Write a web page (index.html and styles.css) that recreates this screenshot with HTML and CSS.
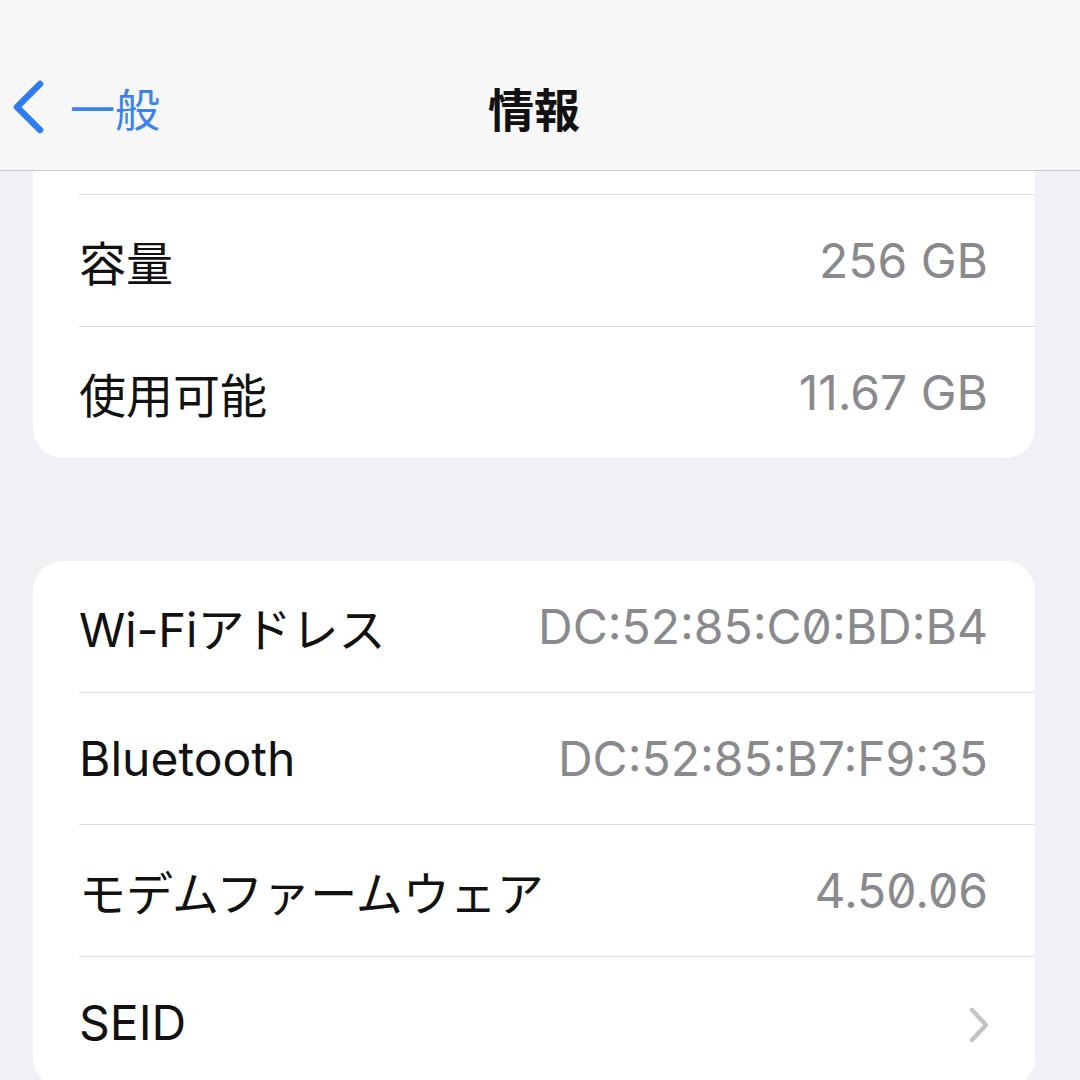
FILE: index.html
```html
<!DOCTYPE html>
<html lang="ja">
<head>
<meta charset="utf-8">
<title>情報</title>
<link rel="stylesheet" href="styles.css">
</head>
<body>
<header class="navbar">
  <div class="nav-back">
    <svg class="back-chevron" width="36" height="56" viewBox="0 0 36 56">
      <path d="M30 5 L7 28 L30 51" fill="none" stroke="#2f7cf0" stroke-width="6.5" stroke-linecap="round" stroke-linejoin="round"/>
    </svg>
    <span class="back-label">一般</span>
  </div>
  <h1 class="nav-title">情報</h1>
  <div></div>
</header>

<main class="content">
  <section class="group group-cut">
    <div class="row row-stub"></div>
    <div class="row"><span class="label">容量</span><span class="value">256 GB</span></div>
    <div class="row"><span class="label">使用可能</span><span class="value">11.67 GB</span></div>
  </section>

  <section class="group">
    <div class="row"><span class="label">Wi-Fiアドレス</span><span class="value mono">DC:52:85:C0:BD:B4</span></div>
    <div class="row"><span class="label latin">Bluetooth</span><span class="value mono">DC:52:85:B7:F9:35</span></div>
    <div class="row"><span class="label">モデムファームウェア</span><span class="value mono">4.50.06</span></div>
    <div class="row">
      <span class="label latin">SEID</span>
      <svg class="disclosure" width="24" height="38" viewBox="0 0 24 38">
        <path d="M5 4 L19 19 L5 34" fill="none" stroke="#c4c4c7" stroke-width="4.5" stroke-linecap="round" stroke-linejoin="round"/>
      </svg>
    </div>
  </section>
</main>
</body>
</html>
```

FILE: styles.css
```css
html, body {
  margin: 0;
  padding: 0;
}

body {
  width: 1080px;
  height: 1080px;
  overflow: hidden;
  background: #f0f0f5;
  font-family: Inter, "Noto Sans CJK JP", sans-serif;
  color: #111;
}

.navbar {
  display: grid;
  grid-template-columns: 1fr auto 1fr;
  align-items: center;
  height: 126px;
  padding-top: 44px;
  background: #f7f7f7;
  border-bottom: 1px solid #c9c9cc;
}

.nav-back {
  display: flex;
  align-items: center;
  padding-left: 10px;
  gap: 24px;
}

.back-chevron {
  display: block;
}

.back-label {
  font-family: "Noto Sans CJK JP", sans-serif;
  font-size: 45px;
  color: #3a83ef;
  line-height: 1;
}

.nav-title {
  margin: 0 12px 0 0;
  font-family: "Noto Sans CJK JP", sans-serif;
  font-size: 46px;
  font-weight: 700;
  color: #111;
  line-height: 1;
}

.content {
  display: flex;
  flex-direction: column;
  gap: 103px;
  padding: 0 45px 0 33px;
}

.group {
  background: #fff;
  border-radius: 30px;
  padding-left: 46px;
}

.group-cut {
  border-radius: 0 0 30px 30px;
}

.row {
  display: flex;
  align-items: center;
  justify-content: space-between;
  height: 131px;
  padding-right: 47px;
  border-bottom: 1px solid #dcdcdf;
  font-size: 47px;
}

.row:last-child {
  border-bottom: none;
}

.row-stub {
  height: 23px;
}

.label {
  color: #111;
}

.label.latin {
  font-size: 48px;
}

.value {
  color: #8a8a8e;
  font-size: 48px;
}

.mono {
  font-feature-settings: "zero" 1;
}

.disclosure {
  display: block;
  margin-right: -3px;
  margin-top: 4px;
}
```
